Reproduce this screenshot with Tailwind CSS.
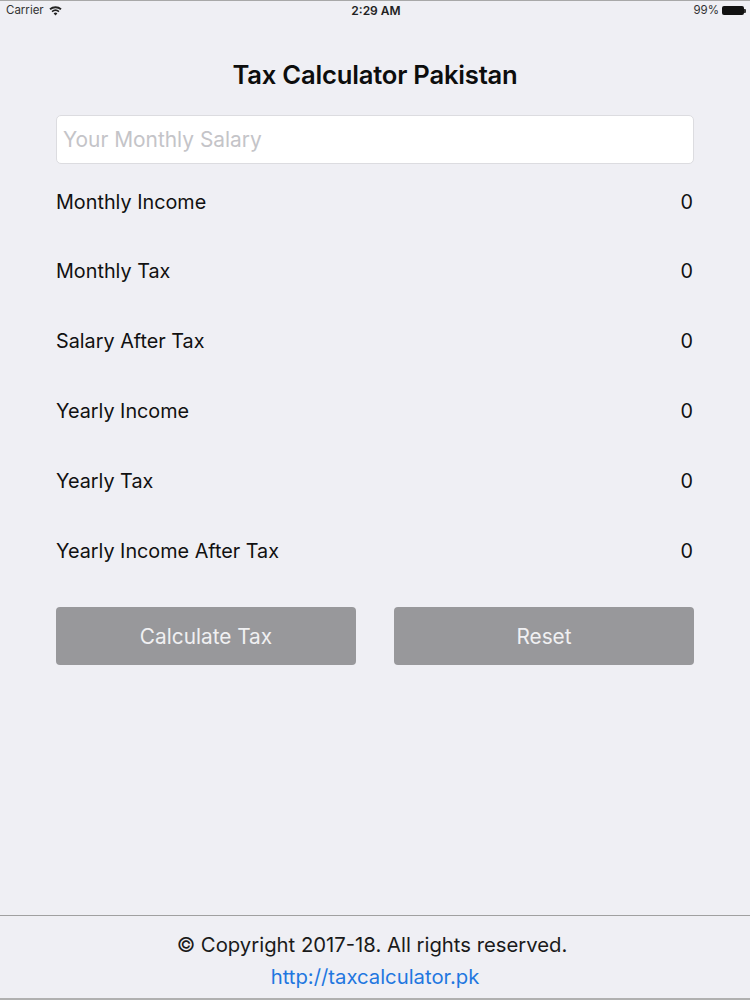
<!DOCTYPE html>
<html>
<head>
<meta charset="utf-8">
<script src="https://cdn.jsdelivr.net/npm/@tailwindcss/browser@4"></script>
</head>
<body class="m-0">
<div class="w-[750px] h-[1000px] bg-[#efeff4] flex flex-col overflow-hidden font-['Inter','Liberation_Sans',sans-serif] text-[#111]">
  <div class="h-[20px] shrink-0 border-t border-[#a8a8a8] grid grid-cols-3 items-center pl-[6px] pr-[4px] text-[11.500px] text-[#333]">
    <div class="flex items-center gap-[5px]">
      <span>Carrier</span>
      <svg width="13" height="10" viewBox="0 0 13 10" fill="#222"><path d="M6.5 9.6 4.6 7.4a2.9 2.9 0 0 1 3.8 0zM3.6 6.3 2.500 5a6.200 6.200 0 0 1 8 0L9.400 6.300a4.500 4.500 0 0 0-5.800 0zM1.600 3.900.4 2.600a9.400 9.400 0 0 1 12.200 0l-1.200 1.300a7.700 7.700 0 0 0-9.800 0z"/></svg>
    </div>
    <div class="text-center font-semibold text-[#222] text-[12px]">2:29 AM</div>
    <div class="flex items-center justify-end gap-[3px]">
      <span>99%</span>
      <div class="flex items-center">
        <div class="w-[22px] h-[9px] bg-[#111] rounded-[2px]"></div>
        <div class="w-[2px] h-[4px] bg-[#333] rounded-r-[1px]"></div>
      </div>
    </div>
  </div>
  <div class="flex-1 px-[56px] flex flex-col">
    <h1 class="mt-[37px] h-[36px] leading-[36px] text-center text-[25.600px] font-semibold tracking-[-0.2px] text-[#0d0d0d]">Tax Calculator Pakistan</h1>
    <div class="mt-[22px] h-[49px] shrink-0 bg-white border border-[#dcdce0] rounded-[5px] flex items-center px-[6px] text-[20.900px] text-[#c4c4c8]">Your Monthly Salary</div>
    <div class="flex flex-col mt-[3.500px] text-[19.800px]">
      <div class="h-[69.800px] flex justify-between items-center"><span>Monthly Income</span><span class="pr-[1px]">0</span></div>
      <div class="h-[69.800px] flex justify-between items-center"><span>Monthly Tax</span><span class="pr-[1px]">0</span></div>
      <div class="h-[69.800px] flex justify-between items-center"><span>Salary After Tax</span><span class="pr-[1px]">0</span></div>
      <div class="h-[69.800px] flex justify-between items-center"><span>Yearly Income</span><span class="pr-[1px]">0</span></div>
      <div class="h-[69.800px] flex justify-between items-center"><span>Yearly Tax</span><span class="pr-[1px]">0</span></div>
      <div class="h-[69.800px] flex justify-between items-center"><span>Yearly Income After Tax</span><span class="pr-[1px]">0</span></div>
    </div>
    <div class="mt-[20.500px] flex gap-[38px] text-[20.800px] text-[#f0f0f2]">
      <div class="flex-1 h-[58px] pt-[2px] bg-[#98989b] rounded-[4px] flex items-center justify-center">Calculate Tax</div>
      <div class="flex-1 h-[58px] pt-[2px] bg-[#98989b] rounded-[4px] flex items-center justify-center">Reset</div>
    </div>
  </div>
  <div class="h-[85px] shrink-0 border-t border-[#a0a0a0] border-b-2 border-b-[#b0b0b0] flex flex-col items-center text-[20.300px]">
    <div class="mt-[13px] mr-[6px] h-[32px] leading-[32px] text-[#1a1a1a]">© Copyright 2017-18. All rights reserved.</div>
    <div class="h-[32px] leading-[32px] text-[#1f77e0]">http://taxcalculator.pk</div>
  </div>
</div>
</body>
</html>
